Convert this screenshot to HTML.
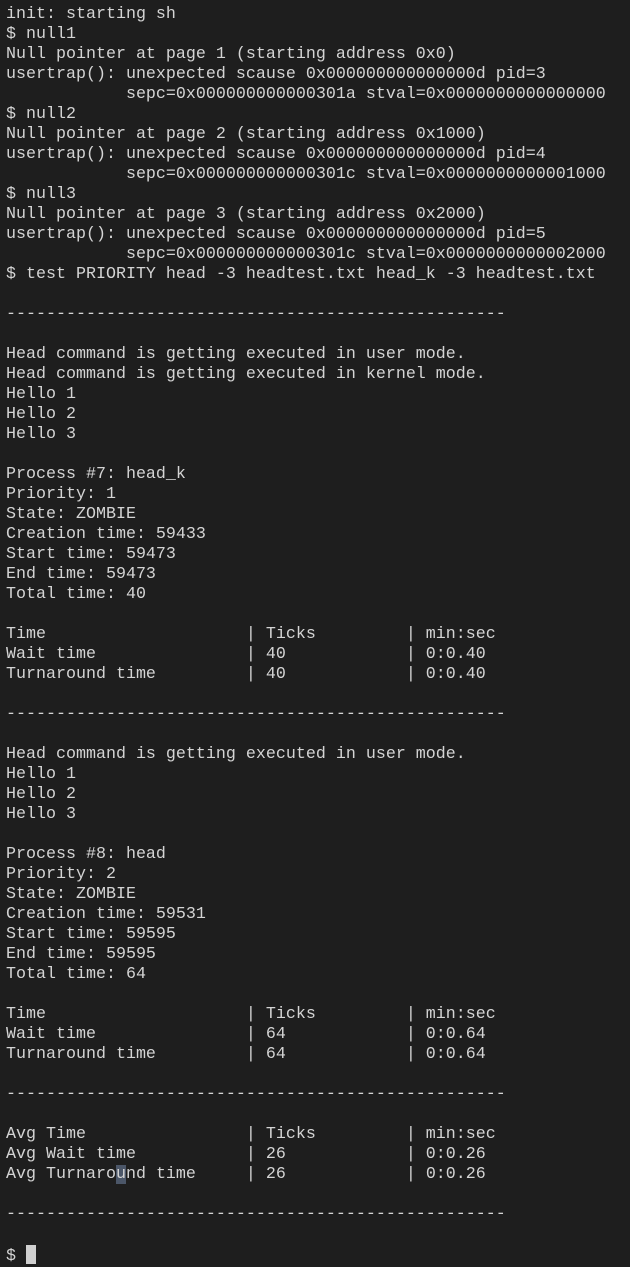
<!DOCTYPE html>
<html><head><style>
html,body{margin:0;padding:0;background:#1e1e1e;width:630px;height:1264px;overflow:hidden}
pre{position:absolute;left:6px;top:5px;margin:0;font-family:"Liberation Mono",monospace;font-size:16.67px;line-height:20px;color:#d4d4d4;white-space:pre}
.hl{background:#4b5668}
.cur{display:inline-block;width:10px;height:19px;background:#d0d0d0;vertical-align:-4px}
</style></head><body>
<pre>init: starting sh
$ null1
Null pointer at page 1 (starting address 0x0)
usertrap(): unexpected scause 0x000000000000000d pid=3
            sepc=0x000000000000301a stval=0x0000000000000000
$ null2
Null pointer at page 2 (starting address 0x1000)
usertrap(): unexpected scause 0x000000000000000d pid=4
            sepc=0x000000000000301c stval=0x0000000000001000
$ null3
Null pointer at page 3 (starting address 0x2000)
usertrap(): unexpected scause 0x000000000000000d pid=5
            sepc=0x000000000000301c stval=0x0000000000002000
$ test PRIORITY head -3 headtest.txt head_k -3 headtest.txt

--------------------------------------------------

Head command is getting executed in user mode.
Head command is getting executed in kernel mode.
Hello 1
Hello 2
Hello 3

Process #7: head_k
Priority: 1
State: ZOMBIE
Creation time: 59433
Start time: 59473
End time: 59473
Total time: 40

Time                    | Ticks         | min:sec
Wait time               | 40            | 0:0.40
Turnaround time         | 40            | 0:0.40

--------------------------------------------------

Head command is getting executed in user mode.
Hello 1
Hello 2
Hello 3

Process #8: head
Priority: 2
State: ZOMBIE
Creation time: 59531
Start time: 59595
End time: 59595
Total time: 64

Time                    | Ticks         | min:sec
Wait time               | 64            | 0:0.64
Turnaround time         | 64            | 0:0.64

--------------------------------------------------

Avg Time                | Ticks         | min:sec
Avg Wait time           | 26            | 0:0.26
Avg Turnaro<span class="hl">u</span>nd time     | 26            | 0:0.26

--------------------------------------------------

$ <span class="cur"></span></pre>
</body></html>
